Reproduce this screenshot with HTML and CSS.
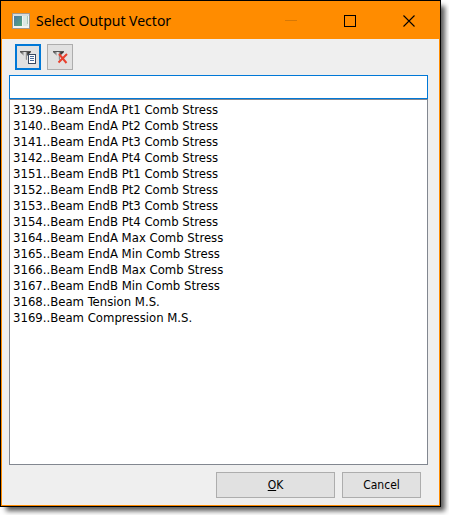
FILE: index.html
```html
<!DOCTYPE html>
<html lang="en">
<head>
<meta charset="UTF-8">
<meta name="viewport" content="width=device-width, initial-scale=1.0">
<title>Select Output Vector</title>
<link rel="stylesheet" href="styles.css">
</head>
<body>
<div class="window">
  <form class="dialog">
    <header class="titlebar">
      <svg class="app-icon" width="18" height="16" viewBox="0 0 18 16">
        <defs>
          <linearGradient id="screen" x1="0" y1="0" x2="1" y2="1">
            <stop offset="0" stop-color="#4a78a8"/>
            <stop offset="1" stop-color="#58a878"/>
          </linearGradient>
        </defs>
        <rect x="0.5" y="0.5" width="17" height="15" fill="#f4f4f4" stroke="#a09890"/>
        <rect x="1" y="1" width="16" height="2" fill="#d4dce0"/>
        <rect x="2" y="3" width="8" height="10" fill="url(#screen)"/>
        <rect x="11" y="3" width="5" height="10" fill="#dce8e4"/>
        <rect x="15" y="3" width="1" height="8" fill="#a8c8b8"/>
      </svg>
      <h1>Select Output Vector</h1>
      <button type="button" class="caption" aria-label="Minimize" disabled>
        <svg width="12" height="12" viewBox="0 0 12 12"><path d="M0 5.5H12" stroke="#d67806"/></svg>
      </button>
      <button type="button" class="caption" aria-label="Maximize">
        <svg width="12" height="12" viewBox="0 0 12 12"><rect x="0.5" y="0.5" width="11" height="11" fill="none" stroke="#000"/></svg>
      </button>
      <button type="button" class="caption" aria-label="Close">
        <svg width="12" height="12" viewBox="0 0 12 12"><path d="M0.5 0.5L11.5 11.5M11.5 0.5L0.5 11.5" stroke="#000" stroke-width="1.1"/></svg>
      </button>
    </header>

    <div class="toolbar">
      <button type="button" class="tool active" aria-label="Filter list">
        <svg width="16" height="16" viewBox="0 0 16 16">
          <defs>
            <linearGradient id="funnel">
              <stop offset="0" stop-color="#333"/>
              <stop offset="0.2" stop-color="#777"/>
              <stop offset="0.45" stop-color="#f4f4f4"/>
              <stop offset="0.7" stop-color="#444"/>
              <stop offset="1" stop-color="#222"/>
            </linearGradient>
          </defs>
          <path d="M0 2H11V3L7 7V11L4 10V7L0 3Z" fill="url(#funnel)"/>
          <path d="M0 2.5H11" stroke="#555"/>
          <rect x="8" y="5" width="8" height="10" fill="#384860"/>
          <rect x="9" y="6" width="6" height="8" fill="#fff"/>
          <path d="M10 7.5H14M10 9.5H14M10 11.5H14" stroke="#4a6a98"/>
        </svg>
      </button>
      <button type="button" class="tool" aria-label="Clear filter">
        <svg width="16" height="16" viewBox="0 0 16 16">
          <path d="M1 2H12V3L8 7V11L5 10V7L1 3Z" fill="url(#funnel)"/>
          <path d="M1 2.5H12" stroke="#555"/>
          <path d="M7 5L14.5 14M15 5L6.5 13.5" stroke="#e8402e" stroke-width="2"/>
        </svg>
      </button>
    </div>

    <div class="content">
      <input type="text" class="filter" aria-label="Filter">
      <select class="vectors" size="14" aria-label="Output vectors">
        <option>3139..Beam EndA Pt1 Comb Stress</option>
        <option>3140..Beam EndA Pt2 Comb Stress</option>
        <option>3141..Beam EndA Pt3 Comb Stress</option>
        <option>3142..Beam EndA Pt4 Comb Stress</option>
        <option>3151..Beam EndB Pt1 Comb Stress</option>
        <option>3152..Beam EndB Pt2 Comb Stress</option>
        <option>3153..Beam EndB Pt3 Comb Stress</option>
        <option>3154..Beam EndB Pt4 Comb Stress</option>
        <option>3164..Beam EndA Max Comb Stress</option>
        <option>3165..Beam EndA Min Comb Stress</option>
        <option>3166..Beam EndB Max Comb Stress</option>
        <option>3167..Beam EndB Min Comb Stress</option>
        <option>3168..Beam Tension M.S.</option>
        <option>3169..Beam Compression M.S.</option>
      </select>
    </div>

    <footer class="actions">
      <button type="submit" class="push ok" accesskey="o"><u>O</u>K</button>
      <button type="button" class="push cancel">Cancel</button>
    </footer>
  </form>
</div>
</body>
</html>
```
FILE: styles.css
```css
* {
  box-sizing: border-box;
}
body {
  margin: 0;
  background: #fff;
  color: #000;
  font-family: "DejaVu Sans Condensed", "DejaVu Sans", sans-serif;
  font-size: 12px;
}
button, input, select {
  font: inherit;
  color: inherit;
}
svg {
  display: block;
}
.window {
  display: flex;
  min-height: 100vh;
  padding: 0 8px 8px 0;
}
.dialog {
  flex: 1;
  display: flex;
  flex-direction: column;
  border: 1px solid #ff8c00;
  outline: 1px solid #000;
  margin: 1px;
  background: #efefef;
  box-shadow: 5px 5px 5px rgba(0, 0, 0, 0.65);
}

/* title bar */
.titlebar {
  display: flex;
  align-items: center;
  height: 37px;
  padding: 0 1px 0 10px;
  background: #ff8c00;
}
.titlebar h1 {
  flex: 1;
  margin: 0 0 0 6px;
  font-family: "Noto Sans", sans-serif;
  font-size: 14px;
  font-weight: normal;
  line-height: 20px;
}
.caption {
  display: flex;
  align-items: center;
  justify-content: center;
  width: 59px;
  height: 37px;
  padding: 0;
  border: none;
  background: none;
}

/* filter buttons */
.toolbar {
  display: flex;
  gap: 6px;
  padding: 5px 13px;
}
.tool {
  display: flex;
  align-items: center;
  justify-content: center;
  width: 26px;
  height: 26px;
  padding: 0;
  border: 1px solid #adadad;
  background: #e1e1e1;
}
.tool.active {
  border: 2px solid #0078d7;
}

/* filter box and list */
.content {
  flex: 1;
  display: flex;
  flex-direction: column;
  padding: 0 11px 0 7px;
}
.filter {
  height: 24px;
  padding: 0 4px;
  border: 1px solid #0078d7;
  background: #fff;
  outline: none;
}
.vectors {
  flex: 1;
  padding: 2px 0;
  border: 1px solid #828790;
  border-radius: 0;
  background: #fff;
  font-size: 13px;
  outline: none;
  overflow: hidden;
}
.vectors option {
  min-height: 16px;
  padding: 0 3px;
}

/* bottom buttons */
.actions {
  display: flex;
  justify-content: flex-end;
  gap: 7px;
  padding: 7px 18px 7px 7px;
}
.push {
  height: 26px;
  padding: 0;
  border: 1px solid #adadad;
  background: #e1e1e1;
}
.ok {
  width: 119px;
}
.cancel {
  width: 79px;
}
```
